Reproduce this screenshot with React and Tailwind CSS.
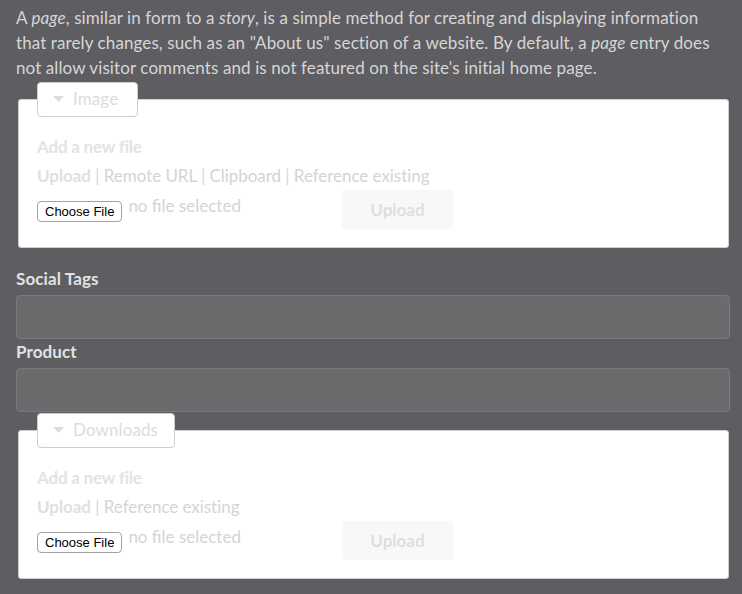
import React from "react";

const font = { fontFamily: "Lato, 'Open Sans', sans-serif" };

function Legend({ label, width }) {
  return (
    <div
      className={`relative z-10 ml-[19px] flex h-[35px] items-center gap-[9px] rounded-[4px] border border-[#cfcfcf] bg-white pb-[2px] pl-[15px] text-[17px] text-[#dcdcdc] ${width}`}
    >
      <svg width="11" height="6" viewBox="0 0 11 6" className="mt-[1px]">
        <path d="M0 0 L11 0 L5.5 6 Z" fill="#dcdcdc" />
      </svg>
      <span className="leading-none">{label}</span>
    </div>
  );
}

function FileBox({ label, legendWidth, links }) {
  return (
    <div className="ml-[2px] mr-[1px]">
      <Legend label={label} width={legendWidth} />
      <div className="-mt-[18px] h-[149px] rounded-[3px] border border-[#cfcfcf] bg-white pl-[18px] pt-[34px] pr-4 tracking-normal">
        <div className="text-[17px] font-bold leading-[25px] text-[#e3e3e3] tracking-[-0.2px]">Add a new file</div>
        <div className="mt-[4px] text-[17px] leading-[25px] text-[#d4d4d4] tracking-[-0.05px]">
          <span className="font-bold text-[#e0e0e0]">Upload</span>
          {links.map((l) => (
            <span key={l}>
              {" "}
              <span className="text-[#d8d8d8]">|</span> {l}
            </span>
          ))}
        </div>
        <div className="flex items-start">
          <div className="flex w-[305px] items-start">
            <div
              className="mt-[13px] flex h-[21px] items-center rounded-[4px] border border-[#a3a3a3] bg-white px-[7px] text-[13px] text-black"
              style={{ fontFamily: "'Liberation Sans', Arial, sans-serif" }}
            >
              Choose File
            </div>
            <span className="ml-[6px] mt-[5px] text-[17px] leading-[25px] text-[#d4d4d4]">no file selected</span>
          </div>
          <div className="mt-[2px] flex h-[39px] w-[111px] items-center justify-center rounded-[3px] bg-[#f8f8f8] text-[17px] font-bold text-[#dedede]">
            Upload
          </div>
        </div>
      </div>
    </div>
  );
}

function Field({ label }) {
  return (
    <div>
      <div className="text-[17px] font-bold leading-[25px] text-[#e2e2e2]">{label}</div>
      <div className="mt-[4px] h-[44px] rounded-[4px] border border-[#7a7a7c] bg-[#6b6b6d]" />
    </div>
  );
}

export default function App() {
  return (
    <div
      className="min-h-[594px] w-[742px] bg-[#5e5d62] pl-4 pr-3 pt-[5px] tracking-[0.1px]"
      style={font}
    >
      <p className="text-[17px] leading-[25px] text-[#d6d6d6]">
        A <em>page</em>, similar in form to a <em>story</em>, is a simple method for creating and displaying information
        <br />
        that rarely changes, such as an "About us" section of a website. By default, a <em>page</em> entry does
        <br />
        not allow visitor comments and is not featured on the site's initial home page.
      </p>
      <div className="mt-[2px]">
        <FileBox
          label="Image"
          legendWidth="w-[101px]"
          links={["Remote URL", "Clipboard", "Reference existing"]}
        />
      </div>
      <div className="mt-[18px]">
        <Field label="Social Tags" />
      </div>
      <div>
        <Field label="Product" />
      </div>
      <div className="mt-[1px] pb-4">
        <FileBox label="Downloads" legendWidth="w-[138px]" links={["Reference existing"]} />
      </div>
    </div>
  );
}
